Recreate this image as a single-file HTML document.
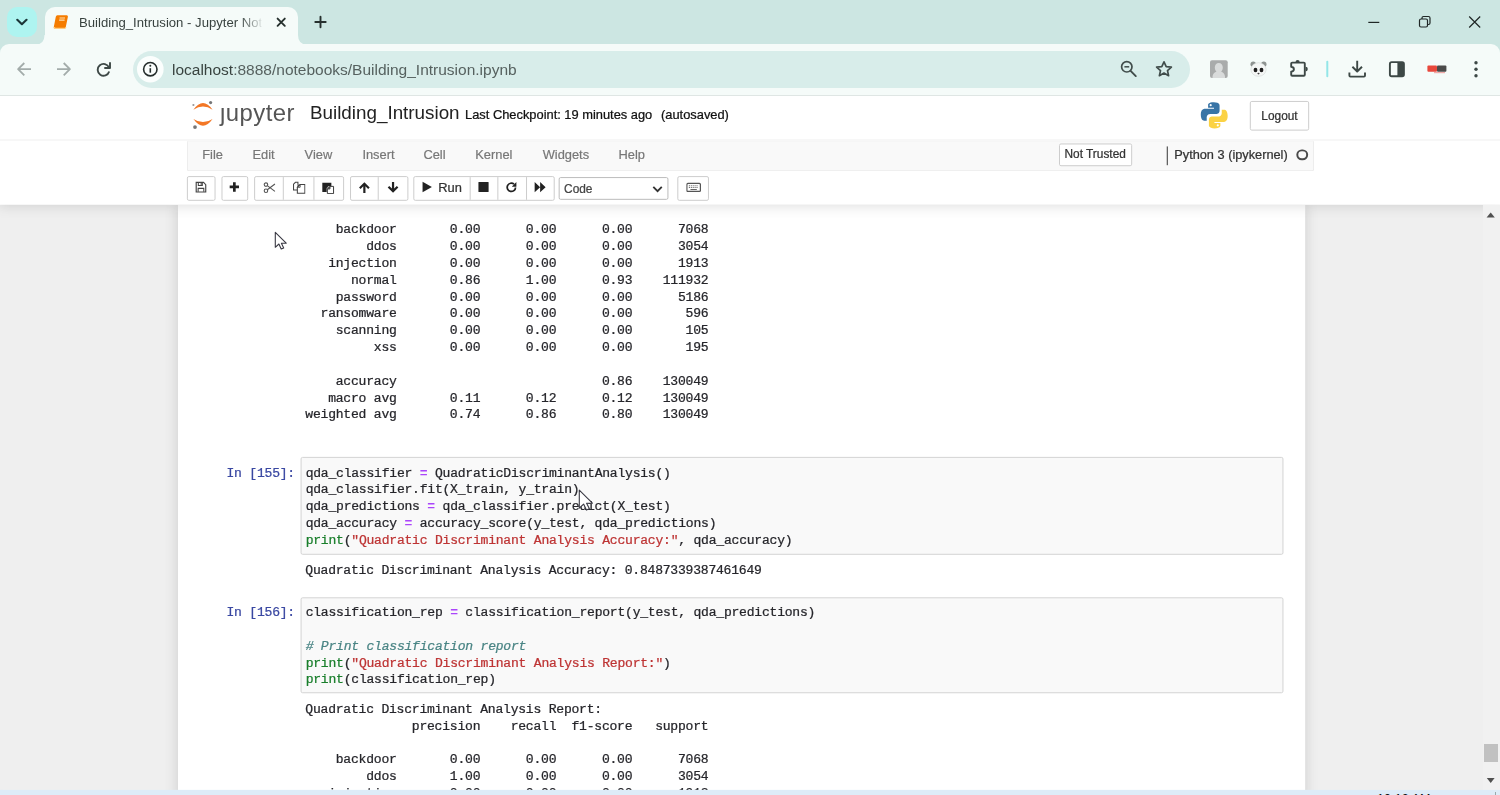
<!DOCTYPE html>
<html lang="en">
<head>
<meta charset="utf-8">
<title>Building_Intrusion - Jupyter Notebook</title>
<style>
*{box-sizing:border-box}
html,body{margin:0;padding:0}
body{width:1500px;height:795px;overflow:hidden;position:relative;background:#efefef;font-family:"Liberation Sans",sans-serif;}
.abs{position:absolute}
/* ---------- browser chrome ---------- */
#tabstrip{left:0;top:0;width:1500px;height:60px;background:#cce6e2}
#toolbar{left:0;top:44px;width:1500px;height:51px;background:#f5fbf9;border-radius:9px 9px 0 0}
#tbline{left:0;top:95px;width:1500px;height:1px;background:#dfe6e4}
#tabsearch{left:6.600px;top:6.600px;width:30.800px;height:30.800px;border-radius:10px;background:#aef4f0}
#tab{left:44.500px;top:6.600px;width:253.500px;height:37.400px;background:#f5fbf9;border-radius:10px 10px 0 0}
#tabtitle,#url{filter:blur(0.35px)}
#tabtitle{left:78.800px;top:14.100px;width:174.500px;height:18px;font-size:12.600px;line-height:18px;color:#38423f;white-space:nowrap;overflow:hidden;transform:scaleX(1.043);transform-origin:0 0}
#tabfade{left:240px;top:10px;width:28px;height:24px;background:linear-gradient(90deg,rgba(245,251,249,0),#f5fbf9 88%)}
#omni{left:132.500px;top:50.600px;width:1057.500px;height:37.200px;border-radius:18.600px;background:#d8edea}
#url{left:172.300px;top:59.800px;font-size:14px;line-height:20px;color:#56615f;white-space:nowrap;transform:scaleX(1.107);transform-origin:0 0}
#url b{font-weight:normal;color:#38423f}
/* ---------- jupyter page ---------- */
#page{filter:blur(0.5px);left:0;top:96px;width:1517px;height:707px;transform:scale(0.98879);transform-origin:0 0;overflow:hidden;background:#efefef;font-size:13px;color:#000}
#header{left:0;top:0;width:1517px;height:110px;background:#fff;box-shadow:0 0 12px 1px rgba(87,87,87,.2);z-index:5}
#site{left:0;top:110px;width:1517px;height:597px;overflow:hidden;background:#efefef}
#nbc{left:180px;top:0;width:1140px;height:700px;background:#fff;box-shadow:0 0 12px 1px rgba(87,87,87,.2)}

/* header pieces (original px inside scaled #page) */
#logo{left:193px;top:4px;width:110px;height:32px}
h1{margin:0;font-weight:normal}
#nbname{left:310.500px;top:5px;height:24px;line-height:24px;font-size:19.05px;color:#222;white-space:nowrap;padding:0 3px}
#ckpt{left:470.3px;top:7px;height:24px;line-height:24px;font-size:13px;color:#111;white-space:nowrap}
#autos{left:668.5px;top:7px;height:24px;line-height:24px;font-size:13px;color:#111;white-space:nowrap}
#pylogo{left:1213px;top:5px;width:30px;height:29px}
#logout{left:1264.3px;top:5.4px;width:59.4px;height:29.4px;border:1px solid #ccc;border-radius:2px;background:#fff;font-size:12px;line-height:29px;text-align:center;color:#333}
#menubar{left:188.500px;top:44.500px;width:1140px;height:31px;background:#f9f9f9;border:1px solid #ebebeb;border-top-color:#f3f3f3;border-radius:2px}
#menubar .mi{position:absolute;top:-1px;height:29px;line-height:29px;font-size:13px;color:#777;white-space:nowrap}
#nottrusted{left:1070.600px;top:48px;width:74px;height:22.800px;border:1px solid #ccc;border-radius:2px;background:#fff;font-size:12px;line-height:20px;text-align:center;color:#333;white-space:nowrap}
#kdiv{left:1180.3px;top:50.5px;width:1.2px;height:19px;background:#333}
#kname{left:1187.600px;top:44.600px;height:29px;line-height:29px;font-size:12.900px;color:#333;white-space:nowrap}
#kcirc{left:1311.200px;top:53.600px;width:11.400px;height:11.400px;border:2px solid #4a4a4a;border-radius:50%}
.tb{position:absolute;top:80.9px;height:24.7px;border:1px solid #ccc;border-radius:2px;background:#fff}
.tb i{position:absolute;top:0;bottom:0;width:1px;background:#ccc}
.tb svg{position:absolute;top:4.5px;width:14px;height:14px}
.tb span{position:absolute;top:0;line-height:22.7px;font-size:13px;color:#333}

/* notebook */
pre{margin:0;font-family:"Liberation Mono",monospace;font-size:13.2px;letter-spacing:-0.223px;line-height:17px;color:#26262b;white-space:pre;position:absolute;-webkit-text-stroke:0.25px currentColor}
.inp{position:absolute;left:303.500px;width:994.500px;height:98.200px;border:1px solid #d2d2d2;border-radius:2px;background:#f9f9f9}
.inp pre{left:4.600px;top:5.600px}
.prm{color:#3a48a2;text-align:right;width:96.500px;left:201.800px}
.out{left:308.800px}
.o{color:#ab45fb;font-weight:bold;-webkit-text-stroke:0}.b{color:#1a7f2c}.st{color:#be3434}.c{color:#4a8585;font-style:italic}
#sbar{left:1483px;top:205px;width:17px;height:585px;background:#f1f1f1}
#sthumb{left:1484px;top:743.500px;width:14px;height:18.500px;background:#c1c1c1}
#ckpt,#autos,#logout,#nottrusted,#kname,.tb span{-webkit-text-stroke:0.25px currentColor}
#menubar .mi{-webkit-text-stroke:0.2px currentColor}
#taskbar{left:0;top:790.400px;width:1500px;height:6px;background:#deecf8;overflow:hidden;box-shadow:0 0 1.500px 0.500px #deecf8}
#clock{left:1377px;top:1.500px;font-size:12.500px;line-height:14px;letter-spacing:.1px;color:#111;white-space:nowrap}
#tdiv{left:1494.500px;top:1.500px;width:1px;height:6px;background:#9aa}
</style>
</head>
<body>
<div id="tabstrip" class="abs"></div>
<div id="toolbar" class="abs"></div>
<div id="tbline" class="abs"></div>
<div id="tabsearch" class="abs"></div>
<div id="tab" class="abs"></div>
<div id="tabtitle" class="abs">Building_Intrusion - Jupyter Notebook</div>
<div id="tabfade" class="abs"></div>
<div id="omni" class="abs"></div>
<div id="url" class="abs"><b>localhost</b>:8888/notebooks/Building_Intrusion.ipynb</div>
<svg id="chromeicons" class="abs" style="left:0;top:0;filter:blur(0.4px)" width="1500" height="96" viewBox="0 0 1500 96">
  <!-- tab shape foot curves -->
  <path d="M35.500 44.500 Q44.500 44.500 44.500 35 H46 V44.500 Z" fill="#f5fbf9"/>
  <path d="M307 44.500 Q298 44.500 298 35 H296.500 V44.500 Z" fill="#f5fbf9"/>
  <!-- tab search chevron -->
  <path d="M17.300 19.800l4.600 4.400 4.600-4.400" fill="none" stroke="#1c3537" stroke-width="2.100" stroke-linecap="round" stroke-linejoin="round"/>
  <!-- favicon: orange book -->
  <g transform="translate(53.500 14.800)">
    <path d="M3.800 0.400h9.400q1.500 0 1.200 1.500l-2.100 10.300q-.3 1.500-1.800 1.500H1.400q-1.500 0-1.100-1.500L2.300 1.900Q2.600 .4 3.800 .4z" fill="#f57c00"/>
    <path d="M0.600 12.300q.2 1.300 1.600 1.300h8.600q1.200 0 1.600-1.300" fill="none" stroke="#ffcc80" stroke-width="1.300"/>
    <path d="M6 3.200h5.500M5.600 5.300h5.500" stroke="#ffe0b2" stroke-width="1.200"/>
  </g>
  <!-- tab close -->
  <path d="M277.600 18.600l7.200 7.200M284.800 18.600l-7.200 7.200" stroke="#26302e" stroke-width="1.900" stroke-linecap="round"/>
  <!-- new tab -->
  <path d="M320.500 16.800v10.400M315.300 22h10.400" stroke="#26302e" stroke-width="1.900" stroke-linecap="round"/>
  <!-- window controls -->
  <path d="M1368.300 22.400h11" stroke="#1f2726" stroke-width="1.200"/>
  <rect x="1419.500" y="19" width="8" height="8" rx="1.500" fill="none" stroke="#1f2726" stroke-width="1.200"/>
  <path d="M1422 19v-1q0-1.500 1.500-1.500h5q1.500 0 1.500 1.500v5q0 1.500-1.500 1.500h-1" fill="none" stroke="#1f2726" stroke-width="1.200"/>
  <path d="M1469.200 16.500l11 11M1480.200 16.500l-11 11" stroke="#1f2726" stroke-width="1.200"/>
  <!-- back / forward / reload -->
  <path d="M31 69.200H18.500M24.300 63l-6.200 6.200 6.200 6.200" fill="none" stroke="#a3acaa" stroke-width="1.800" stroke-linejoin="round"/>
  <path d="M57 69.200h12.500M63.700 63l6.200 6.200-6.200 6.200" fill="none" stroke="#a3acaa" stroke-width="1.800" stroke-linejoin="round"/>
  <path d="M109 67.500A5.900 5.900 0 1 0 109.200 71.500" fill="none" stroke="#3d4846" stroke-width="1.900"/>
  <path d="M110 62.300v5.700h-5.700" fill="none" stroke="#3d4846" stroke-width="1.900" stroke-linejoin="round"/>
  <!-- site info -->
  <circle cx="150.300" cy="69.200" r="13.300" fill="#fbfefd"/>
  <circle cx="150.300" cy="69.200" r="6.700" fill="none" stroke="#262e2d" stroke-width="1.600"/>
  <path d="M150.300 68.200v4.500" stroke="#262e2d" stroke-width="1.600"/>
  <circle cx="150.300" cy="65.800" r="1" fill="#262e2d"/>
  <!-- zoom -->
  <circle cx="1126.800" cy="66.800" r="5.200" fill="none" stroke="#414d4b" stroke-width="1.700"/>
  <path d="M1130.600 70.800l5.200 5.300" stroke="#414d4b" stroke-width="1.900" stroke-linecap="round"/>
  <path d="M1124.400 66.800h4.800" stroke="#414d4b" stroke-width="1.500"/>
  <!-- star -->
  <path d="M1164 61.800l2.200 4.800 5.200.5-3.900 3.500 1.100 5.100-4.600-2.700-4.600 2.700 1.100-5.100-3.900-3.500 5.200-.5z" fill="none" stroke="#414d4b" stroke-width="1.700" stroke-linejoin="round"/>
  <!-- extension: avatar -->
  <rect x="1210" y="60.300" width="17.700" height="17.700" rx="2" fill="#a9abab"/>
  <path d="M1212.500 78c0-4 1.500-5.500 4-6.500-1.200-1-1.700-2.500-1.700-4 0-2.700 1.700-4.600 4-4.600s4 1.900 4 4.600c0 1.500-.5 3-1.700 4 2.500 1 4 2.500 4 6.500z" fill="#d9dbdb"/>
  <!-- extension: panda -->
  <circle cx="1253.200" cy="64.300" r="2.700" fill="#8e9391"/>
  <circle cx="1263.800" cy="64.300" r="2.700" fill="#8e9391"/>
  <ellipse cx="1258.500" cy="69.500" rx="7.600" ry="6.800" fill="#f4f6f5" stroke="#d3d8d6" stroke-width=".6"/>
  <ellipse cx="1255.500" cy="70" rx="1.900" ry="2.300" fill="#1e1e1e"/>
  <ellipse cx="1261.500" cy="70" rx="1.900" ry="2.300" fill="#1e1e1e"/>
  <ellipse cx="1258.500" cy="73.600" rx="1.100" ry=".8" fill="#444"/>
  <!-- extensions puzzle -->
  <path d="M1292.200 62.600h11.600q1 0 1 1v11.200q0 1-1 1h-11.600q-1 0-1-1v-3.200q2.700-.4 2.700-2.400t-2.700-2.400v-3.200q0-1 1-1z" fill="none" stroke="#3d4846" stroke-width="1.900" stroke-linejoin="round"/>
  <path d="M1295.500 62.200a2.100 2.300 0 0 1 4.200 0zM1305.600 66.800a2.200 2.300 0 0 1 0 4.600z" fill="#3d4846"/>
  <!-- separator -->
  <rect x="1326.300" y="60.700" width="2" height="16.600" rx="1" fill="#93e6e8"/>
  <!-- download -->
  <path d="M1357.200 60.800v10.400M1352.400 66.800l4.800 4.700 4.800-4.700" fill="none" stroke="#3d4846" stroke-width="1.900" stroke-linejoin="round"/>
  <path d="M1349.400 72.600v3q0 1 1 1h13.600q1 0 1-1v-3" fill="none" stroke="#3d4846" stroke-width="1.900" stroke-linejoin="round"/>
  <!-- side panel -->
  <rect x="1389.900" y="62.100" width="14" height="14.200" rx="1.800" fill="none" stroke="#3d4846" stroke-width="1.900"/>
  <path d="M1397.400 62.100h5q1.500 0 1.500 1.500v11.200q0 1.500-1.500 1.500h-5z" fill="#3d4846"/>
  <!-- red/dark badge -->
  <rect x="1427.400" y="65.500" width="9.600" height="6.300" rx="1" fill="#e8483c"/>
  <rect x="1437" y="65.500" width="9.400" height="6.300" rx="1" fill="#4a4a4a"/>
  <rect x="1434" y="72" width="11" height="1.200" fill="#e88" opacity=".7"/>
  <!-- menu dots -->
  <circle cx="1476" cy="62.800" r="1.700" fill="#3d4846"/>
  <circle cx="1476" cy="69.300" r="1.700" fill="#3d4846"/>
  <circle cx="1476" cy="75.800" r="1.700" fill="#3d4846"/>
</svg>
<div id="page" class="abs">
  <header id="header" class="abs">
    <svg id="logo" class="abs" viewBox="0 0 110 32">
      <path d="M2.600 9.800 Q12.300 -3.800 22 9.800 Q12.300 3.400 2.600 9.800 Z" fill="#f37726"/>
      <path d="M2.600 19.200 Q12.300 32.800 22 19.200 Q12.300 25.600 2.600 19.200 Z" fill="#f37726"/>
      <circle cx="20" cy="2.700" r="1.600" fill="#767677"/>
      <circle cx="2.600" cy="5.100" r="1.100" fill="#989798"/>
      <circle cx="4.200" cy="27.400" r="1.900" fill="#767677"/>
      <text x="29.400" y="21.200" font-family="Liberation Sans, sans-serif" font-size="24.200" fill="#555" textLength="75.500" lengthAdjust="spacing">jupyter</text>
      <rect x="29" y="0" width="7" height="7.900" fill="#fff"/>
    </svg>
    <h1 id="nbname" class="abs">Building_Intrusion</h1>
    <div id="ckpt" class="abs">Last Checkpoint: 19 minutes ago</div>
    <div id="autos" class="abs">(autosaved)</div>
    <svg id="pylogo" class="abs" viewBox="0 0 30 29">
      <path d="M14.6 1.2c-5.6 0-5.8 2.4-5.8 2.4v3.2h6v1H5.6S1.4 7.3 1.4 13.8s3.6 6.3 3.6 6.3h2.4v-3.2s-.1-3.6 3.6-3.6h6s3.4.1 3.4-3.3V4.6s.5-3.4-5.8-3.4z" fill="#3874a6"/>
      <circle cx="11.4" cy="4.3" r="1.1" fill="#fff"/>
      <path d="M15.4 27.8c5.6 0 5.8-2.4 5.8-2.4v-3.2h-6v-1h9.200000000000001s4.200000000000001.5 4.200000000000001-6-3.6-6.3-3.6-6.3h-2.4v3.2s.1 3.6-3.6 3.6h-6s-3.4-.1-3.4 3.3v5.400000000000001s-.5 3.4 5.8 3.4z" fill="#fbd244"/>
      <circle cx="18.6" cy="24.7" r="1.1" fill="#fff"/>
    </svg>
    <div id="logout" class="abs" role="button">Logout</div>
    <div class="abs" style="left:0;top:43.600px;width:1517px;height:1px;background:#eee"></div>
    <nav id="menubar" class="abs">
      <span class="mi" style="left:15px">File</span>
      <span class="mi" style="left:65.8px">Edit</span>
      <span class="mi" style="left:118.5px">View</span>
      <span class="mi" style="left:177px">Insert</span>
      <span class="mi" style="left:238.7px">Cell</span>
      <span class="mi" style="left:291.2px">Kernel</span>
      <span class="mi" style="left:359.3px">Widgets</span>
      <span class="mi" style="left:436px">Help</span>
    </nav>
    <div id="nottrusted" class="abs" role="button">Not Trusted</div>
    <div id="kdiv" class="abs"></div>
    <div id="kname" class="abs">Python 3 (ipykernel)</div>
    <div id="kcirc" class="abs"></div>
    <div class="tb" style="left:189.1px;width:28.5px;"><svg viewBox="0 0 14 14" style="left:7.0px;width:12.5px;height:12.5px;top:4.3px"><path d="M1.6 1.6h8.300000000000001l2.5 2.5v8.300000000000001H1.6z" fill="none" stroke="#444" stroke-width="1.3"/><path d="M4 1.800v3.200h4.500V1.800M3.800 12.200V8.300h6.400v3.900" fill="none" stroke="#444" stroke-width="1.200"/><rect x="6.600" y="2.300" width="1.300" height="2" fill="#444"/></svg></div>
    <div class="tb" style="left:223.5px;width:27.5px;"><svg viewBox="0 0 14 14" style="left:6.7px;width:12px;height:12px;top:4.5px"><path d="M5.400 1.500h3.200v3.900h3.900v3.200H8.600v3.900H5.400V8.600H1.500V5.400h3.900z" fill="#222"/></svg></div>
    <div class="tb" style="left:256.9px;width:90.8px;"><i style="left:28.4px"></i><i style="left:58.8px"></i><svg viewBox="0 0 14 14" style="left:7.7px;width:13px;height:13px;top:4.0px"><circle cx="3.200" cy="3.900" r="1.900" fill="none" stroke="#555" stroke-width="1.200"/><circle cx="3.200" cy="10.600" r="1.900" fill="none" stroke="#555" stroke-width="1.200"/><path d="M4.700 5l8.300 6.300M4.700 9.500L13 3.200" fill="none" stroke="#555" stroke-width="1.200"/></svg><svg viewBox="0 0 14 14" style="left:37.8px;width:13.5px;height:13.5px;top:3.8px"><path d="M5.500 3.600V1.300h-2.600L0.900 3.300v6h3.700" fill="none" stroke="#444" stroke-width="1.100"/><path d="M4.900 4.300h2.300M7.800 3.600h5v9.300H4.900V6.500z" fill="none" stroke="#444" stroke-width="1.100"/><path d="M4.900 6.500l2.900-2.900v2.900z" fill="none" stroke="#444" stroke-width="1"/></svg><svg viewBox="0 0 14 14" style="left:67.5px;width:13.5px;height:13.5px;top:3.8px"><path d="M1 1.800h9.500v3.500H7.500L5.600 7.300v4.200H1z" fill="#222"/><path d="M6.300 7.600l2-2v2zM9 5.600h3.800v7.600H6.300V8.300h2.700z" fill="#fff" stroke="#333" stroke-width="1"/></svg></div>
    <div class="tb" style="left:353.6px;width:59.2px;"><i style="left:27.8px"></i><svg viewBox="0 0 14 14" style="left:7.1px;width:13px;height:13px;top:4.0px"><path d="M7 1.200l5.800 5.800-1.700 1.700-2.900-2.900v7.200H5.800V5.800L2.900 8.700 1.200 7z" fill="#222"/></svg><svg viewBox="0 0 14 14" style="left:36.4px;width:13px;height:13px;top:4.0px"><path d="M7 12.800l5.800-5.800-1.700-1.700-2.900 2.900V1H5.800v7.200L2.900 5.300 1.200 7z" fill="#222"/></svg></div>
    <div class="tb" style="left:417.9px;width:143.4px;"><i style="left:55.9px"></i><i style="left:84.3px"></i><i style="left:113.1px"></i><svg viewBox="0 0 14 14" style="left:6.8px;width:12px;height:12px;top:4.5px"><path d="M1.600 0.900L12.600 7 1.600 13.100z" fill="#222"/></svg><span style="left:24.3px">Run</span><svg viewBox="0 0 14 14" style="left:64.6px;width:12px;height:12px;top:4.5px"><rect x="1" y="1" width="12" height="12" rx="0.800" fill="#222"/></svg><svg viewBox="0 0 14 14" style="left:92.6px;width:12.5px;height:12.5px;top:4.3px"><path d="M11.600 7.200A4.700 4.700 0 1 1 9.900 3.500" fill="none" stroke="#222" stroke-width="2"/><path d="M12.600 1.200v5.200H7.400z" fill="#222"/></svg><svg viewBox="0 0 14 14" style="left:121.2px;width:12.5px;height:12.5px;top:4.3px"><path d="M0.800 1.200L7 7 0.800 12.800zM7 1.200L13.200 7 7 12.800z" fill="#222"/></svg></div>
    <div class="tb" style="left:565.3px;width:110.6px;top:81.900px;height:23.200px;border-color:#bbb"><span style="left:4.200px;line-height:23.600px;font-size:12px;color:#444">Code</span><svg viewBox="0 0 14 14" style="left:92.5px;top:5px;width:12px;height:12px"><path d="M2 4.500l5 5 5-5" fill="none" stroke="#333" stroke-width="2.200"/></svg></div>
    <div class="tb" style="left:685.4px;width:31.8px;"><svg viewBox="0 0 14 14" style="left:7.5px;width:15px;height:15px;top:3.0px"><rect x="0.600" y="3.200" width="12.800" height="7.600" rx="1" fill="none" stroke="#555" stroke-width="1.200"/><path d="M2.500 5.400h9M2.500 7.100h9" stroke="#666" stroke-width="1" stroke-dasharray="1 0.800"/><path d="M4 8.900h6" stroke="#666" stroke-width="1"/></svg></div>
  </header>
  <main id="site" class="abs">
    <div id="nbc" class="abs"></div>
    <pre class="out" style="top:17.20px">    backdoor       0.00      0.00      0.00      7068
        ddos       0.00      0.00      0.00      3054
   injection       0.00      0.00      0.00      1913
      normal       0.86      1.00      0.93    111932
    password       0.00      0.00      0.00      5186
  ransomware       0.00      0.00      0.00       596
    scanning       0.00      0.00      0.00       105
         xss       0.00      0.00      0.00       195

    accuracy                           0.86    130049
   macro avg       0.11      0.12      0.12    130049
weighted avg       0.74      0.86      0.80    130049
</pre>
    <pre class="prm" style="top:263.20px">In [155]:</pre>
    <div class="inp" style="top:255.10px;height:98.7px"><pre style="top:7.10px">qda_classifier <span class="o">=</span> QuadraticDiscriminantAnalysis()
qda_classifier.fit(X_train, y_train)
qda_predictions <span class="o">=</span> qda_classifier.predict(X_test)
qda_accuracy <span class="o">=</span> accuracy_score(y_test, qda_predictions)
<span class="b">print</span>(<span class="st">"Quadratic Discriminant Analysis Accuracy:"</span>, qda_accuracy)</pre></div>
    <pre class="out" style="top:361.40px">Quadratic Discriminant Analysis Accuracy: 0.8487339387461649</pre>
    <pre class="prm" style="top:404.00px">In [156]:</pre>
    <div class="inp" style="top:396.60px;height:97.1px"><pre style="top:6.50px">classification_rep <span class="o">=</span> classification_report(y_test, qda_predictions)

<span class="c"># Print classification report</span>
<span class="b">print</span>(<span class="st">"Quadratic Discriminant Analysis Report:"</span>)
<span class="b">print</span>(classification_rep)</pre></div>
    <pre class="out" style="top:501.50px">Quadratic Discriminant Analysis Report:
              precision    recall  f1-score   support

    backdoor       0.00      0.00      0.00      7068
        ddos       1.00      0.00      0.00      3054
   injection       0.00      0.00      0.00      1913
</pre>
  </main>
</div>
<div id="sbar" class="abs"></div>
<svg class="abs" style="left:1483px;top:205px" width="17" height="585" viewBox="0 0 17 585"><path d="M3.600 12.600L7.700 7.600l4.100 5z" fill="#505050"/><path d="M3.800 573L7.700 578l3.900-5z" fill="#505050"/></svg>
<div id="sthumb" class="abs"></div>
<svg class="abs" style="left:0;top:0;z-index:50" width="1500" height="795" viewBox="0 0 1500 795">
  <path d="M275.300 232.300V247.300L278.900 244L281.200 249L283.700 247.900L281.400 243.200H286.200Z" fill="#fff" stroke="#3a3a44" stroke-width="1.100" stroke-linejoin="round"/>
  <path d="M579.300 490.100V508.100L583.600 504.100L586.400 510.100L589.400 508.800L586.600 503.200H592.400Z" fill="#fff" stroke="#3a3a44" stroke-width="1.100" stroke-linejoin="round"/>
</svg>
<div id="taskbar" class="abs"><div id="clock" class="abs">10:12 AM</div><div id="tdiv" class="abs"></div></div>
</body>
</html>
